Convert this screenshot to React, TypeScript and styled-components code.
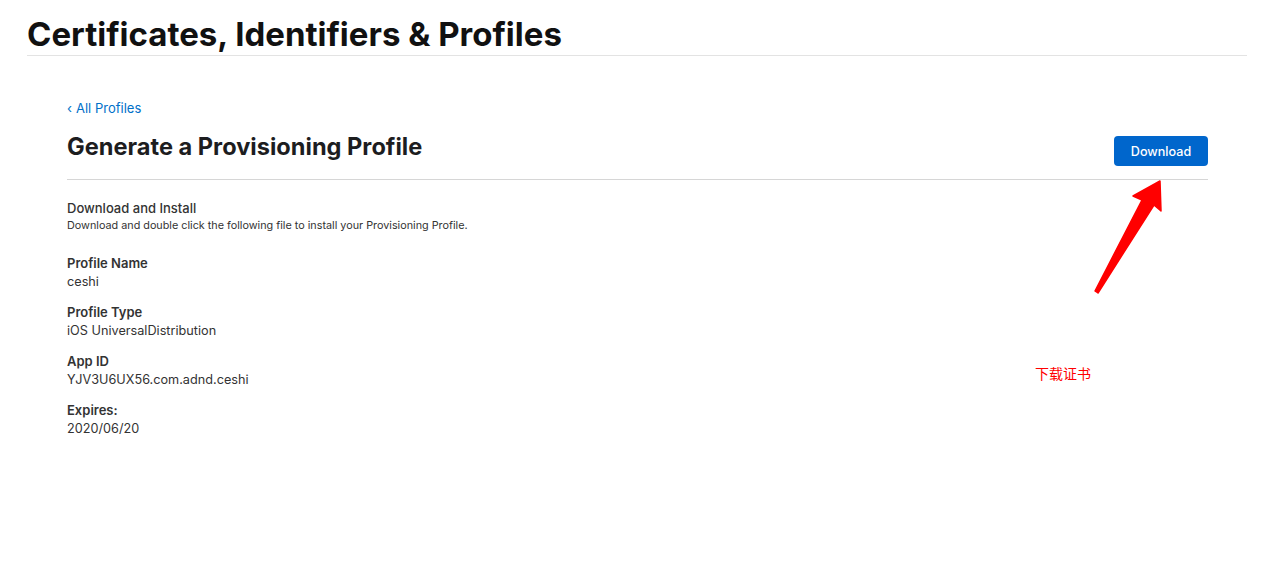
import React from "react";
import styled, { createGlobalStyle } from "styled-components";

const Global = createGlobalStyle`
  html, body { margin: 0; padding: 0; background: #fff; }
  body { font-family: Inter, "Noto Sans", "Noto Sans CJK SC", sans-serif; color: #1d1d1f; }
`;

const Page = styled.div`
  width: 1276px;
  height: 575px;
  position: relative;
  overflow: hidden;
  background: #fff;
`;

const Header = styled.header`
  margin: 0 29px 0 27px;
  padding-top: 14px;
  padding-bottom: 1px;
  border-bottom: 1px solid #e3e3e3;
`;

const SiteTitle = styled.h1`
  margin: 0;
  font-size: 33px;
  line-height: 40px;
  font-weight: 700;
  color: #111;
`;

const Main = styled.main`
  margin: 0 68px 0 67px;
  padding-top: 41px;
`;

const BackLink = styled.a`
  display: inline-flex;
  align-items: center;
  gap: 4px;
  font-size: 13px;
  line-height: 18px;
  color: #0070c9;
  text-decoration: none;
`;

const TitleRow = styled.div`
  display: flex;
  justify-content: space-between;
  align-items: flex-start;
  margin-top: 14px;
  padding-bottom: 13px;
  border-bottom: 1px solid #d6d6d6;
`;

const PageTitle = styled.h2`
  margin: 0;
  font-size: 23.6px;
  line-height: 32px;
  font-weight: 700;
  color: #1d1d1f;
`;

const Button = styled.button`
  width: 94px;
  height: 30px;
  margin-top: 5px;
  border: none;
  border-radius: 4px;
  background: #0066cc;
  color: #fff;
  font-family: inherit;
  font-size: 12.6px;
  font-weight: 500;
`;

const Intro = styled.div`
  margin-top: 19px;
`;

const IntroTitle = styled.div`
  font-size: 13px;
  line-height: 18px;
  font-weight: 500;
  color: #333;
`;

const IntroText = styled.div`
  margin-top: 2px;
  font-size: 10.8px;
  line-height: 14px;
  color: #333;
`;

const Fields = styled.dl`
  margin: 21px 0 0;
  display: flex;
  flex-direction: column;
  gap: 12px;
`;

const Field = styled.div`
  display: flex;
  flex-direction: column;
`;

const Label = styled.dt`
  font-size: 13px;
  line-height: 18px;
  font-weight: 600;
  color: #333;
`;

const Value = styled.dd`
  margin: 1px 0 0;
  font-size: 12.7px;
  line-height: 18px;
  color: #333;
`;

const Note = styled.div`
  position: absolute;
  left: 1035px;
  top: 363px;
  font-family: "Noto Sans CJK SC", sans-serif;
  font-size: 14px;
  line-height: 20px;
  color: #ff0000;
`;

const Arrow = styled.svg`
  position: absolute;
  left: 1090px;
  top: 175px;
`;

const fields = [
  ["Profile Name", "ceshi"],
  ["Profile Type", "iOS UniversalDistribution"],
  ["App ID", "YJV3U6UX56.com.adnd.ceshi"],
  ["Expires:", "2020/06/20"],
];

export default function App() {
  return (
    <Page>
      <Global />
      <Header>
        <SiteTitle>Certificates, Identifiers &amp; Profiles</SiteTitle>
      </Header>
      <Main>
        <BackLink href="#">
          <span>‹</span>
          <span>All Profiles</span>
        </BackLink>
        <TitleRow>
          <PageTitle>Generate a Provisioning Profile</PageTitle>
          <Button>Download</Button>
        </TitleRow>
        <Intro>
          <IntroTitle>Download and Install</IntroTitle>
          <IntroText>Download and double click the following file to install your Provisioning Profile.</IntroText>
        </Intro>
        <Fields>
          {fields.map(([l, v]) => (
            <Field key={l}>
              <Label>{l}</Label>
              <Value>{v}</Value>
            </Field>
          ))}
        </Fields>
      </Main>
      <Note>下载证书</Note>
      <Arrow width="80" height="125" viewBox="1090 175 80 125">
        <path
          d="M1095 291 L1142 200 L1133 196 L1160 181 L1161 211 L1154 205 L1098 293 Z"
          fill="#ff0000"
          stroke="#ff0000"
          strokeWidth="1.5"
          strokeLinejoin="round"
        />
      </Arrow>
    </Page>
  );
}
